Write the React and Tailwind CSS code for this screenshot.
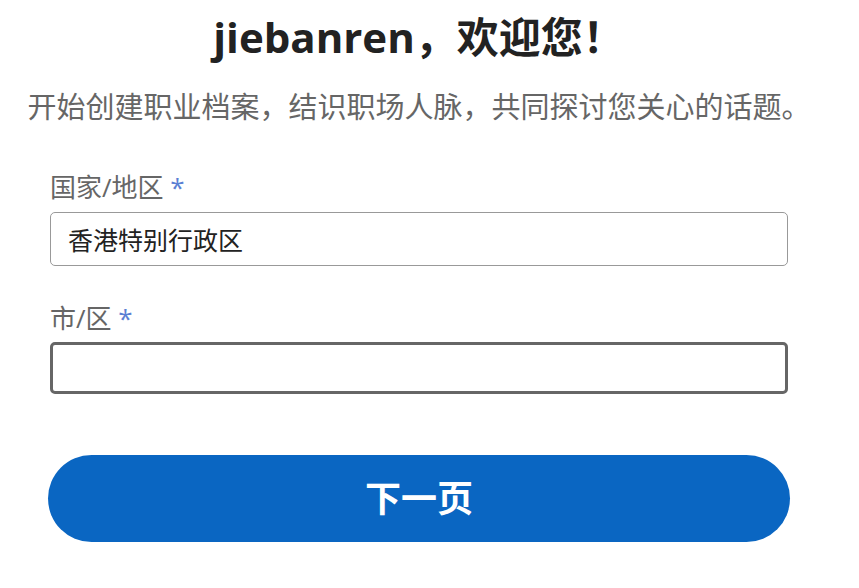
import React, { useState } from 'react';

const cjk = "font-['Open_Sans','Noto_Sans_CJK_SC',sans-serif]";

const Field = ({ label, value, onChange, focused, className = '' }) => (
  <div className={className}>
    <label className="block h-[32px] text-[26px] leading-[32px] text-[#666]">
      {label} <span className="text-[#5b7fd3]">*</span>
    </label>
    <input
      value={value}
      onChange={onChange}
      className={
        focused
          ? 'mt-[8px] block w-full h-[52px] px-[16px] text-[25px] text-[#222] bg-white border-[3px] border-[#666] rounded-[5px] outline-none'
          : 'mt-[9px] block w-full h-[54px] px-[17px] text-[25px] text-[#222] bg-white border border-[#999] rounded-[5px] outline-none'
      }
    />
  </div>
);

const App = () => {
  const [country, setCountry] = useState('香港特别行政区');
  const [city, setCity] = useState('');

  return (
    <div className={`w-[859px] h-[588px] bg-white overflow-hidden ${cjk}`}>
      <div className="ml-[48px] w-[742px] flex flex-col">
        {/* Heading */}
        <div className="flex flex-col items-center">
          <h1 className="mt-[12px] h-[50px] text-[42px] leading-[50px] font-bold text-[#222] whitespace-nowrap">
            jiebanren，欢迎您！
          </h1>
          <p className="mt-[27px] h-[36px] text-[29px] leading-[36px] text-[#666] whitespace-nowrap">
            开始创建职业档案，结识职场人脉，共同探讨您关心的话题。
          </p>
        </div>

        {/* Form */}
        <div className="px-[2px]">
          <Field
            className="mt-[46px]"
            label="国家/地区"
            value={country}
            onChange={(e) => setCountry(e.target.value)}
          />
          <Field
            className="mt-[36px]"
            label="市/区"
            value={city}
            onChange={(e) => setCity(e.target.value)}
            focused
          />
        </div>

        <button className="mt-[61px] h-[87px] w-full rounded-full bg-[#0a66c2] text-white text-[36px] font-bold">
          下一页
        </button>
      </div>
    </div>
  );
};

export default App;
